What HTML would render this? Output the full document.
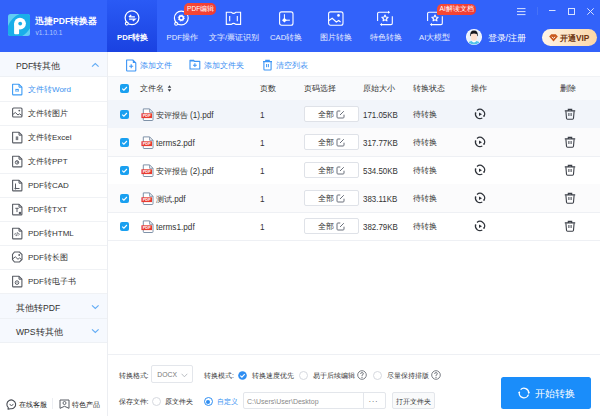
<!DOCTYPE html>
<html><head><meta charset="utf-8">
<style>
*{margin:0;padding:0;box-sizing:border-box}
html,body{width:600px;height:416px;overflow:hidden;background:#fff;font-family:"Liberation Sans",sans-serif;color:#333}
.abs{position:absolute}
svg{position:absolute;overflow:visible}
#hdr{position:absolute;left:0;top:0;width:600px;height:52px;background:#3262fa}
.t{position:absolute;white-space:nowrap;line-height:1}
.l{font-size:8.8px;display:inline-block;transform:scaleX(.93);transform-origin:0 0}
.l2{transform:scaleX(.9)}
.nav{font-size:7.7px;color:#e8eeff;top:34px}
.si{position:absolute;left:0;width:107px;height:25px;border-bottom:1px solid #f0f2f5}
.si .t{left:28px;top:9px;font-size:8px;color:#333}
.sec{position:absolute;left:0;width:107px;height:24px;background:#f6f9fe;border-bottom:1px solid #eef1f5}
.sec .t{left:16px;top:10px;font-size:8.6px;color:#333}
.row{position:absolute;left:108px;width:492px;height:28px;border-bottom:1px solid #eef0f4}
.row .t{font-size:8px;color:#333;top:10px}
.cb{position:absolute;width:9px;height:9px;border-radius:2px;background:#1aa0f0}
.btn{position:absolute;left:304px;width:55px;height:16px;border:1px solid #dfe2e8;border-radius:2px;background:#fff}
</style></head><body>
<div id="hdr">
  <div class="abs" style="left:107px;top:0;width:50px;height:52px;background:linear-gradient(#2a5af5,#1a42e1)"></div>
  <!-- logo -->
  <svg style="left:8px;top:14px" width="22" height="22" viewBox="0 0 22 22"><defs><clipPath id="lg"><rect width="22" height="22" rx="2.5"/></clipPath></defs><rect width="22" height="22" rx="2.5" fill="#62cdf3"/><g clip-path="url(#lg)"><ellipse cx="11.8" cy="11.5" rx="15" ry="9.8" transform="rotate(-45 11.8 11.5)" fill="#1aaee9"/></g><circle cx="12" cy="9.6" r="5.9" fill="#fff"/><path d="M6.1 9.6h5v9.6q0 1-1 1h-3q-1 0-1-1z" fill="#fff"/><circle cx="12.2" cy="9.6" r="1.9" fill="#1aaee9"/></svg>
  <div class="t" style="left:35px;top:17px;font-size:8.6px;font-weight:bold;color:#fff">迅捷PDF转换器</div>
  <div class="t" style="left:35.5px;top:29.5px;font-size:6.5px;color:#b4c9fb">v1.1.10.1</div>
  <!-- nav icons -->
  <svg style="left:124px;top:10px" width="16" height="17" viewBox="0 0 16 17"><circle cx="8" cy="7.8" r="6.9" fill="none" stroke="#fff" stroke-width="1.2"/><circle cx="2.8" cy="13.6" r="1.45" fill="#2150ea" stroke="#fff" stroke-width="1.1"/><path d="M4.9 6.9H10.9M4.9 6.9L7.2 5M5.1 9.1H11.1L8.8 11" fill="none" stroke="#fff" stroke-width="1.25"/></svg>
  <svg style="left:173px;top:10px" width="16" height="17" viewBox="0 0 16 17"><circle cx="8.3" cy="8" r="6.9" fill="none" stroke="#fff" stroke-width="1.2"/><circle cx="3.1" cy="13.8" r="1.45" fill="#3262fa" stroke="#fff" stroke-width="1.1"/><circle cx="8.3" cy="8" r="2.1" fill="none" stroke="#fff" stroke-width="1.6"/><circle cx="8.3" cy="8" r="3.1" fill="none" stroke="#fff" stroke-width=".9" stroke-dasharray="1 1.44"/></svg>
  <svg style="left:225px;top:11px" width="17" height="15" viewBox="0 0 17 15"><path d="M1.3 1.3H6.4Q8.6 3.3 10.8 1.3H15.6V13.4H10.8Q8.6 11.4 6.4 13.4H1.3Z" fill="none" stroke="#fff" stroke-width="1.1"/><path d="M4.7 4.9v5.3M12.3 4.9v5.3" stroke="#fff" stroke-width="1.1"/></svg>
  <svg style="left:278px;top:11px" width="16" height="15" viewBox="0 0 16 15"><rect x="1.6" y="0.9" width="13.4" height="13.4" rx="2" fill="none" stroke="#fff" stroke-width="1.1"/><path d="M6.4 3.2v6h5.5" fill="none" stroke="#fff" stroke-width="1"/><path d="M6.4 6.8l2.4 2.4-2.4 2.4-2.4-2.4z" fill="#fff"/></svg>
  <svg style="left:327px;top:11px" width="17" height="15" viewBox="0 0 17 15"><rect x="1.6" y="0.9" width="14.4" height="13.4" rx="2" fill="none" stroke="#fff" stroke-width="1.1"/><path d="M1.6 9.7L5.2 7.3 9.3 11 11.7 9.5 13.6 11" fill="none" stroke="#fff" stroke-width="1.1"/><circle cx="11.5" cy="4.4" r="1.3" fill="#fff"/></svg>
  <svg style="left:375px;top:9px" width="19" height="19" viewBox="0 0 19 19"><path d="M2.6 12V4.6Q2.6 3.3 3.9 3.3H13.2M17.3 7.2V14.3Q17.3 15.6 16 15.6H6.8" fill="none" stroke="#fff" stroke-width="1.1"/><path d="M13 1.8L15.2 3.3 13 4.8zM7 14.1L4.8 15.6 7 17.1z" fill="#fff"/><path d="M10 6l.95 1.95 2.15.3-1.55 1.5.37 2.1L10 10.85l-1.92 1 .37-2.1-1.55-1.5 2.15-.3z" fill="none" stroke="#fff" stroke-width="1.1" stroke-linejoin="round"/></svg>
  <svg style="left:424.5px;top:9px" width="19" height="19" viewBox="0 0 19 19"><path d="M2.6 12V4.6Q2.6 3.3 3.9 3.3H13.2M17.3 7.2V14.3Q17.3 15.6 16 15.6H6.8" fill="none" stroke="#fff" stroke-width="1.1"/><path d="M13 1.8L15.2 3.3 13 4.8zM7 14.1L4.8 15.6 7 17.1z" fill="#fff"/><path d="M10 6l.95 1.95 2.15.3-1.55 1.5.37 2.1L10 10.85l-1.92 1 .37-2.1-1.55-1.5 2.15-.3z" fill="none" stroke="#fff" stroke-width="1.1" stroke-linejoin="round"/></svg>
  <div class="t nav" style="left:117px;font-weight:bold;color:#fff">PDF转换</div>
  <div class="t nav" style="left:166.5px">PDF操作</div>
  <div class="t nav" style="left:209px">文字/票证识别</div>
  <div class="t nav" style="left:270px">CAD转换</div>
  <div class="t nav" style="left:320px">图片转换</div>
  <div class="t nav" style="left:369.5px">特色转换</div>
  <div class="t nav" style="left:419px">AI大模型</div>
  <!-- badges -->
  <div class="abs" style="left:184.2px;top:3.2px;width:31.6px;height:11.8px;border-radius:5px 5px 5px 1px;background:linear-gradient(90deg,#f84a33,#ef3b34)"></div>
  <div class="t" style="left:187px;top:5.5px;font-size:6.6px;color:#fff">PDF编辑</div>
  <div class="abs" style="left:437px;top:3.5px;width:39px;height:11.5px;border-radius:5px 5px 5px 1px;background:linear-gradient(90deg,#f84a33,#ef3b34)"></div>
  <div class="t" style="left:439.5px;top:5.5px;font-size:6.8px;color:#fff">AI解读文档</div>
  <!-- window controls -->
  <svg style="left:517px;top:8px" width="9" height="8" viewBox="0 0 9 8"><path d="M0 0.6h8.5M0 3.6h8.5M0 6.6h8.5" stroke="#d8e2ff" stroke-width="1"/></svg>
  <div class="abs" style="left:537px;top:7px;width:1px;height:8px;background:#4672f8"></div>
  <svg style="left:549px;top:7px" width="8" height="8" viewBox="0 0 8 8"><path d="M0 3.5h6.5" stroke="#d8e2ff" stroke-width="1"/></svg>
  <svg style="left:568px;top:7.5px" width="8" height="8" viewBox="0 0 8 8"><rect x="0.5" y="0.5" width="6" height="6" fill="none" stroke="#d8e2ff" stroke-width="1"/></svg>
  <svg style="left:586.5px;top:7.5px" width="8" height="8" viewBox="0 0 8 8"><path d="M0.3 0.3l6.4 6.4M6.7 0.3l-6.4 6.4" stroke="#d8e2ff" stroke-width="1"/></svg>
  <!-- avatar -->
  <svg style="left:466px;top:29px" width="16" height="16" viewBox="0 0 16 16"><defs><clipPath id="av"><circle cx="8" cy="8" r="7.6"/></clipPath></defs><circle cx="8" cy="8" r="8" fill="#fff"/><circle cx="8" cy="8" r="7.3" fill="#e9f1fb"/><g clip-path="url(#av)"><path d="M1 16.5Q1.5 12.6 5.6 12L8 13.6 10.4 12Q14.5 12.6 15 16.5z" fill="#52c2ea"/><path d="M5.6 12L8 13.6 10.4 12 9.6 11.2H6.4z" fill="#fff"/><rect x="5.1" y="4.2" width="5.8" height="7.6" rx="2.4" fill="#fde0cf"/><path d="M4.3 7.2Q3.6 1.6 8 1.6Q12.4 1.6 11.7 7.2L11.1 7.1 10.8 4.9Q8 4 5.2 4.9L4.9 7.1z" fill="#14161c"/></g></svg>
  <div class="t" style="left:487.5px;top:33.7px;font-size:9px;color:#fff">登录/注册</div>
  <div class="abs" style="left:541.5px;top:28.5px;width:55.5px;height:17px;border-radius:8.5px;background:linear-gradient(90deg,#fff5e8,#fbd6a5)"></div>
  <svg style="left:549px;top:33.5px" width="9" height="8" viewBox="0 0 9 8"><path d="M0.2 2.4L2.2 0.3h4.6l2 2.1L4.5 7.6z" fill="#c9581c"/><path d="M2.8 2.8L4.5 4.3 6.2 2.8" fill="none" stroke="#fff" stroke-width="0.9"/></svg>
  <div class="t" style="left:560px;top:33.5px;font-size:8.3px;font-weight:bold;color:#6e3410">开通VIP</div>
</div>

<!-- sidebar -->
<div class="abs" style="left:0;top:52px;width:107px;height:364px;background:#fff"></div>
<div class="abs" style="left:107px;top:52px;width:1px;height:364px;background:#eceef2"></div>
<div class="sec" style="top:52px;height:25px"><div class="t">PDF转其他</div></div>
<svg width="9" height="6" viewBox="0 0 9 6" style="left:91px;top:62px"><path d="M1 4.6L4.3 1.5 7.6 4.6" fill="none" stroke="#62acf5" stroke-width="1.15"/></svg>
<div class="si" style="top:77px"><div class="t" style="color:#3b93f0">文件转Word</div></div>
<svg width="12" height="13" viewBox="0 0 12 13" style="left:11px;top:83px"><path d="M1.6 1.3H8L10.9 4.2V11.2Q10.9 11.9 10.2 11.9H2.3Q1.6 11.9 1.6 11.2Z" fill="none" stroke="#3c9bf5" stroke-width="1.1" stroke-linejoin="round"/><path d="M8 1.3V4.2H10.9" fill="none" stroke="#3c9bf5" stroke-width="1"/><rect x="4.2" y="5.9" width="3.8" height="2.6" fill="#3c9bf5"/><path d="M4.5 6.5l.7 1.6.8-1.2.8 1.2.7-1.6" stroke="#fff" stroke-width=".5" fill="none"/></svg>
<div class="si" style="top:101px"><div class="t" style="">文件转图片</div></div>
<svg width="12" height="12" viewBox="0 0 12 12" style="left:11px;top:107px"><rect x="1.6" y="1" width="9.4" height="9" rx="1" fill="none" stroke="#585c64" stroke-width="1.1"/><path d="M1.8 7.5L4.3 5.5 7 8 8.5 6.8 10.8 8.5" fill="none" stroke="#585c64" stroke-width="1"/><circle cx="8.3" cy="3.6" r=".9" fill="#585c64"/></svg>
<div class="si" style="top:125px"><div class="t" style="">文件转Excel</div></div>
<svg width="12" height="13" viewBox="0 0 12 13" style="left:11px;top:131px"><path d="M1.6 1.3H8L10.9 4.2V11.2Q10.9 11.9 10.2 11.9H2.3Q1.6 11.9 1.6 11.2Z" fill="none" stroke="#585c64" stroke-width="1.1" stroke-linejoin="round"/><path d="M8 1.3V4.2H10.9" fill="none" stroke="#585c64" stroke-width="1"/><rect x="4.8" y="5.5" width="2.4" height="3.6" fill="#585c64"/><path d="M5.4 6.2h1.2M5.4 7.3h1.2M5.4 8.4h1.2" stroke="#fff" stroke-width=".4"/></svg>
<div class="si" style="top:149px"><div class="t" style="">文件转PPT</div></div>
<svg width="12" height="13" viewBox="0 0 12 13" style="left:11px;top:155px"><path d="M1.6 1.3H8L10.9 4.2V11.2Q10.9 11.9 10.2 11.9H2.3Q1.6 11.9 1.6 11.2Z" fill="none" stroke="#585c64" stroke-width="1.1" stroke-linejoin="round"/><path d="M8 1.3V4.2H10.9" fill="none" stroke="#585c64" stroke-width="1"/><circle cx="6" cy="7.4" r="1.7" fill="none" stroke="#585c64" stroke-width="1"/><path d="M6 5.7v1.7h1.7" fill="none" stroke="#585c64" stroke-width=".8"/></svg>
<div class="si" style="top:173px"><div class="t" style="">PDF转CAD</div></div>
<svg width="12" height="13" viewBox="0 0 12 13" style="left:11px;top:179px"><path d="M1.6 1.3H8L10.9 4.2V11.2Q10.9 11.9 10.2 11.9H2.3Q1.6 11.9 1.6 11.2Z" fill="none" stroke="#585c64" stroke-width="1.1" stroke-linejoin="round"/><path d="M8 1.3V4.2H10.9" fill="none" stroke="#585c64" stroke-width="1"/><path d="M4.5 4.5v5h4" fill="none" stroke="#585c64" stroke-width="1"/><path d="M4.5 8l1.2 1.5-1.2 1.2-1.2-1.2z" fill="#585c64"/></svg>
<div class="si" style="top:197px"><div class="t" style="">PDF转TXT</div></div>
<svg width="12" height="13" viewBox="0 0 12 13" style="left:11px;top:203px"><path d="M1.6 1.3H8L10.9 4.2V11.2Q10.9 11.9 10.2 11.9H2.3Q1.6 11.9 1.6 11.2Z" fill="none" stroke="#585c64" stroke-width="1.1" stroke-linejoin="round"/><path d="M8 1.3V4.2H10.9" fill="none" stroke="#585c64" stroke-width="1"/><path d="M4.3 5.3h3.4M6 5.3v3.8" stroke="#585c64" stroke-width="1"/><circle cx="9" cy="10" r="1.3" fill="#585c64"/></svg>
<div class="si" style="top:221px"><div class="t" style="">PDF转HTML</div></div>
<svg width="12" height="13" viewBox="0 0 12 13" style="left:11px;top:227px"><path d="M1.6 1.3H8L10.9 4.2V11.2Q10.9 11.9 10.2 11.9H2.3Q1.6 11.9 1.6 11.2Z" fill="none" stroke="#585c64" stroke-width="1.1" stroke-linejoin="round"/><path d="M8 1.3V4.2H10.9" fill="none" stroke="#585c64" stroke-width="1"/><path d="M4.9 5.8L3.6 7.2l1.3 1.4M7.1 5.8l1.3 1.4-1.3 1.4M6.5 5.3l-1 3.8" fill="none" stroke="#585c64" stroke-width=".8"/></svg>
<div class="si" style="top:245px"><div class="t" style="">PDF转长图</div></div>
<svg width="12" height="12" viewBox="0 0 12 12" style="left:11px;top:251px"><path d="M3.5 1h5L11 3.5v5L8.5 11h-5L1.5 8.5v-5z" fill="none" stroke="#585c64" stroke-width="1.1"/><path d="M1.8 7.8L4.3 5.8 7 8.3 8.5 7 10.8 8.6" fill="none" stroke="#585c64" stroke-width="1"/><circle cx="8.2" cy="4" r=".9" fill="#585c64"/></svg>
<div class="si" style="top:269px"><div class="t" style="">PDF转电子书</div></div>
<svg width="12" height="13" viewBox="0 0 12 13" style="left:11px;top:275px"><path d="M1.6 1.3H8L10.9 4.2V11.2Q10.9 11.9 10.2 11.9H2.3Q1.6 11.9 1.6 11.2Z" fill="none" stroke="#585c64" stroke-width="1.1" stroke-linejoin="round"/><path d="M8 1.3V4.2H10.9" fill="none" stroke="#585c64" stroke-width="1"/><circle cx="6" cy="7.6" r="1.8" fill="none" stroke="#585c64" stroke-width="1"/><circle cx="6" cy="7.6" r=".5" fill="#585c64"/></svg>
<div class="sec" style="top:294px;height:25px"><div class="t" style="top:9.5px">其他转PDF</div></div>
<svg width="9" height="6" viewBox="0 0 9 6" style="left:91px;top:303.5px"><path d="M1 1.4L4.3 4.5 7.6 1.4" fill="none" stroke="#62acf5" stroke-width="1.15"/></svg>
<div class="sec" style="top:319px;height:24px"><div class="t" style="top:9px">WPS转其他</div></div>
<svg width="9" height="6" viewBox="0 0 9 6" style="left:91px;top:328px"><path d="M1 1.4L4.3 4.5 7.6 1.4" fill="none" stroke="#62acf5" stroke-width="1.15"/></svg>
<svg width="11" height="11" viewBox="0 0 11 11" style="left:6px;top:399px"><path d="M2.3 8.6A4.4 4.4 0 1 1 4.6 9.7L2 10.1z" fill="none" stroke="#4a4e56" stroke-width="1.1" stroke-linejoin="round"/><path d="M3.6 5.4Q5.5 7.6 7.4 5.4" fill="none" stroke="#4a4e56" stroke-width="1"/></svg>
<div class="t" style="left:19px;top:401.7px;font-size:6.5px;color:#222">在线客服</div>
<div class="abs" style="left:52px;top:398px;width:1px;height:11px;background:#eceef2"></div>
<svg width="11" height="10" viewBox="0 0 11 10" style="left:58.5px;top:398.5px"><path d="M1 1h9v8.3L5.5 7.3 1 9.3z" fill="none" stroke="#585c64" stroke-width="1" stroke-linejoin="round"/><circle cx="5.5" cy="4" r="1.5" fill="none" stroke="#585c64" stroke-width=".9"/></svg>
<div class="t" style="left:71.5px;top:401.7px;font-size:6.5px;color:#222">特色产品</div>

<!-- main -->
<div class="abs" style="left:108px;top:76px;width:492px;height:24px;background:#f9fafc;border-top:1px solid #f0f2f5"></div>
<svg width="12" height="13" viewBox="0 0 12 13" style="left:125px;top:58.5px"><path d="M1.6 1H7.8L10.8 4V11.3Q10.8 12 10.1 12H2.3Q1.6 12 1.6 11.3Z" fill="none" stroke="#3d95f5" stroke-width="1.1" stroke-linejoin="round"/><path d="M7.8 1V4H10.8z" fill="#3d95f5"/><path d="M4.2 7.3h4M6.2 5.3v4" stroke="#3d95f5" stroke-width="1.1"/></svg>
<div class="t" style="left:140px;top:62px;font-size:7.8px;color:#3b8ff3">添加文件</div>
<svg width="12" height="11" viewBox="0 0 12 11" style="left:189px;top:59px"><path d="M1 1.2H4.5L5.5 2.4H10.8V10H1Z" fill="none" stroke="#3d95f5" stroke-width="1.1" stroke-linejoin="round"/><path d="M1 1h3.5l1 1.4H1z" fill="#3d95f5"/><path d="M4 6.2h3.8M5.9 4.3v3.8" stroke="#3d95f5" stroke-width="1.1"/></svg>
<div class="t" style="left:204px;top:62px;font-size:7.8px;color:#3b8ff3">添加文件夹</div>
<svg width="11" height="12" viewBox="0 0 11 12" style="left:261.5px;top:58.5px"><path d="M1 2.6H10M3.8 2.3V1.2H7.2V2.3" fill="none" stroke="#3d95f5" stroke-width="1.1"/><path d="M3.8 1h3.4v1.3H3.8z" fill="#3d95f5"/><path d="M1.9 2.8V10.3Q1.9 11 2.6 11H8.4Q9.1 11 9.1 10.3V2.8" fill="none" stroke="#3d95f5" stroke-width="1.1"/><path d="M4.6 5v3.2M6.4 5v3.2" stroke="#3d95f5" stroke-width="1"/></svg>
<div class="t" style="left:276px;top:62px;font-size:7.8px;color:#3b8ff3">清空列表</div>

<div class="cb" style="left:120px;top:84px"></div><svg width="9" height="9" viewBox="0 0 9 9" style="left:120px;top:84px"><path d="M2.2 4.6L3.9 6.2 6.9 3" fill="none" stroke="#fff" stroke-width="1.1"/></svg>
<div class="t" style="left:140px;top:84.5px;font-size:8px;color:#333">文件名</div>
<svg width="5" height="7" viewBox="0 0 5 7" style="left:167px;top:85px"><path d="M2.5 0.3L4.3 2.8H0.7zM2.5 6.7L4.3 4.2H0.7z" fill="#3b3f47"/></svg>
<div class="t" style="left:260px;top:84.5px;font-size:8px;color:#333">页数</div>
<div class="t" style="left:304px;top:84.5px;font-size:8px;color:#333">页码选择</div>
<div class="t" style="left:362.5px;top:84.5px;font-size:8px;color:#333">原始大小</div>
<div class="t" style="left:412.5px;top:84.5px;font-size:8px;color:#333">转换状态</div>
<div class="t" style="left:471px;top:84.5px;font-size:8px;color:#333">操作</div>
<div class="t" style="left:560px;top:84.5px;font-size:8px;color:#333">删除</div>

<div id="rows">
<div class="row" style="top:100px;height:29px;background:#f2f5fa;"></div>
<div class="cb" style="left:120px;top:110px"></div><svg width="9" height="9" viewBox="0 0 9 9" style="left:120px;top:110px"><path d="M2.2 4.6L3.9 6.2 6.9 3" fill="none" stroke="#fff" stroke-width="1.1"/></svg>
<svg width="14" height="14" viewBox="0 0 14 14" style="left:140px;top:107px"><path d="M3.3 1.9H9.6L13 5.3V12.8Q13 13.5 12.3 13.5H4Q3.3 13.5 3.3 12.8Z" fill="#fff" stroke="#7f92a8" stroke-width="1" stroke-linejoin="round"/><path d="M9.6 1.9V5.3H13" fill="none" stroke="#7f92a8" stroke-width=".9"/><rect x="1.4" y="6.3" width="10.6" height="4.8" fill="#e83a30"/><text x="6.7" y="10.2" font-size="4" font-family="Liberation Sans" font-weight="bold" fill="#fff" text-anchor="middle">PDF</text></svg>
<div class="t" style="left:156px;top:111px;font-size:8px">安评报告 <span class="l">(1).pdf</span></div>
<div class="t" style="left:260px;top:111px;font-size:8px"><span class="l">1</span></div>
<div class="btn" style="top:106px"></div>
<div class="t" style="left:317.5px;top:111px;font-size:8px">全部</div>
<svg width="9" height="9" viewBox="0 0 9 9" style="left:335.5px;top:110px"><path d="M4.3 1H1.9Q1 1 1 1.9V7.1Q1 8 1.9 8H7.1Q8 8 8 7.1V4.7" fill="none" stroke="#6b717c" stroke-width="1"/><path d="M4 5L7.8 1.2" stroke="#6b717c" stroke-width="1"/></svg>
<div class="t" style="left:363px;top:111px;font-size:8px"><span class="l l2">171.05KB</span></div>
<div class="t" style="left:412.5px;top:111px;font-size:8px">待转换</div>
<svg width="12" height="12" viewBox="0 0 12 12" style="left:474.4px;top:108.4px"><path d="M2.98 2.53A4.6 4.6 0 0 1 10.02 8.23M8.3 9.98A4.6 4.6 0 0 1 1.54 4.89" fill="none" stroke="#2e3239" stroke-width="1.2"/><circle cx="1.6" cy="5" r=".8" fill="#2e3239"/><circle cx="9.95" cy="8.1" r=".8" fill="#2e3239"/><path d="M5 4.5L8 6.2 5 7.9z" fill="#2e3239"/></svg>
<svg width="12" height="12" viewBox="0 0 12 12" style="left:563.5px;top:108px"><path d="M0.8 2.9H11.2M4.3 2.6V1.4H7.7V2.6" fill="none" stroke="#3b3f47" stroke-width="1.1"/><path d="M1.9 3.2L2.5 10.3Q2.6 11.2 3.5 11.2H8.5Q9.4 11.2 9.5 10.3L10.1 3.2" fill="none" stroke="#3b3f47" stroke-width="1.1"/><path d="M4.9 5v3M7.1 5v3" stroke="#3b3f47" stroke-width="1"/></svg>

<div class="row" style="top:128px;height:29px;background:#fbfbfc;"></div>
<div class="cb" style="left:120px;top:138px"></div><svg width="9" height="9" viewBox="0 0 9 9" style="left:120px;top:138px"><path d="M2.2 4.6L3.9 6.2 6.9 3" fill="none" stroke="#fff" stroke-width="1.1"/></svg>
<svg width="14" height="14" viewBox="0 0 14 14" style="left:140px;top:135px"><path d="M3.3 1.9H9.6L13 5.3V12.8Q13 13.5 12.3 13.5H4Q3.3 13.5 3.3 12.8Z" fill="#fff" stroke="#7f92a8" stroke-width="1" stroke-linejoin="round"/><path d="M9.6 1.9V5.3H13" fill="none" stroke="#7f92a8" stroke-width=".9"/><rect x="1.4" y="6.3" width="10.6" height="4.8" fill="#e83a30"/><text x="6.7" y="10.2" font-size="4" font-family="Liberation Sans" font-weight="bold" fill="#fff" text-anchor="middle">PDF</text></svg>
<div class="t" style="left:156px;top:139px;font-size:8px"><span class="l">terms2.pdf</span></div>
<div class="t" style="left:260px;top:139px;font-size:8px"><span class="l">1</span></div>
<div class="btn" style="top:134px"></div>
<div class="t" style="left:317.5px;top:139px;font-size:8px">全部</div>
<svg width="9" height="9" viewBox="0 0 9 9" style="left:335.5px;top:138px"><path d="M4.3 1H1.9Q1 1 1 1.9V7.1Q1 8 1.9 8H7.1Q8 8 8 7.1V4.7" fill="none" stroke="#6b717c" stroke-width="1"/><path d="M4 5L7.8 1.2" stroke="#6b717c" stroke-width="1"/></svg>
<div class="t" style="left:363px;top:139px;font-size:8px"><span class="l l2">317.77KB</span></div>
<div class="t" style="left:412.5px;top:139px;font-size:8px">待转换</div>
<svg width="12" height="12" viewBox="0 0 12 12" style="left:474.4px;top:136.4px"><path d="M2.98 2.53A4.6 4.6 0 0 1 10.02 8.23M8.3 9.98A4.6 4.6 0 0 1 1.54 4.89" fill="none" stroke="#2e3239" stroke-width="1.2"/><circle cx="1.6" cy="5" r=".8" fill="#2e3239"/><circle cx="9.95" cy="8.1" r=".8" fill="#2e3239"/><path d="M5 4.5L8 6.2 5 7.9z" fill="#2e3239"/></svg>
<svg width="12" height="12" viewBox="0 0 12 12" style="left:563.5px;top:136px"><path d="M0.8 2.9H11.2M4.3 2.6V1.4H7.7V2.6" fill="none" stroke="#3b3f47" stroke-width="1.1"/><path d="M1.9 3.2L2.5 10.3Q2.6 11.2 3.5 11.2H8.5Q9.4 11.2 9.5 10.3L10.1 3.2" fill="none" stroke="#3b3f47" stroke-width="1.1"/><path d="M4.9 5v3M7.1 5v3" stroke="#3b3f47" stroke-width="1"/></svg>

<div class="row" style="top:156px;height:29px;"></div>
<div class="cb" style="left:120px;top:166px"></div><svg width="9" height="9" viewBox="0 0 9 9" style="left:120px;top:166px"><path d="M2.2 4.6L3.9 6.2 6.9 3" fill="none" stroke="#fff" stroke-width="1.1"/></svg>
<svg width="14" height="14" viewBox="0 0 14 14" style="left:140px;top:163px"><path d="M3.3 1.9H9.6L13 5.3V12.8Q13 13.5 12.3 13.5H4Q3.3 13.5 3.3 12.8Z" fill="#fff" stroke="#7f92a8" stroke-width="1" stroke-linejoin="round"/><path d="M9.6 1.9V5.3H13" fill="none" stroke="#7f92a8" stroke-width=".9"/><rect x="1.4" y="6.3" width="10.6" height="4.8" fill="#e83a30"/><text x="6.7" y="10.2" font-size="4" font-family="Liberation Sans" font-weight="bold" fill="#fff" text-anchor="middle">PDF</text></svg>
<div class="t" style="left:156px;top:167px;font-size:8px">安评报告 <span class="l">(2).pdf</span></div>
<div class="t" style="left:260px;top:167px;font-size:8px"><span class="l">1</span></div>
<div class="btn" style="top:162px"></div>
<div class="t" style="left:317.5px;top:167px;font-size:8px">全部</div>
<svg width="9" height="9" viewBox="0 0 9 9" style="left:335.5px;top:166px"><path d="M4.3 1H1.9Q1 1 1 1.9V7.1Q1 8 1.9 8H7.1Q8 8 8 7.1V4.7" fill="none" stroke="#6b717c" stroke-width="1"/><path d="M4 5L7.8 1.2" stroke="#6b717c" stroke-width="1"/></svg>
<div class="t" style="left:363px;top:167px;font-size:8px"><span class="l l2">534.50KB</span></div>
<div class="t" style="left:412.5px;top:167px;font-size:8px">待转换</div>
<svg width="12" height="12" viewBox="0 0 12 12" style="left:474.4px;top:164.4px"><path d="M2.98 2.53A4.6 4.6 0 0 1 10.02 8.23M8.3 9.98A4.6 4.6 0 0 1 1.54 4.89" fill="none" stroke="#2e3239" stroke-width="1.2"/><circle cx="1.6" cy="5" r=".8" fill="#2e3239"/><circle cx="9.95" cy="8.1" r=".8" fill="#2e3239"/><path d="M5 4.5L8 6.2 5 7.9z" fill="#2e3239"/></svg>
<svg width="12" height="12" viewBox="0 0 12 12" style="left:563.5px;top:164px"><path d="M0.8 2.9H11.2M4.3 2.6V1.4H7.7V2.6" fill="none" stroke="#3b3f47" stroke-width="1.1"/><path d="M1.9 3.2L2.5 10.3Q2.6 11.2 3.5 11.2H8.5Q9.4 11.2 9.5 10.3L10.1 3.2" fill="none" stroke="#3b3f47" stroke-width="1.1"/><path d="M4.9 5v3M7.1 5v3" stroke="#3b3f47" stroke-width="1"/></svg>

<div class="row" style="top:184px;height:29px;background:#fbfbfc;"></div>
<div class="cb" style="left:120px;top:194px"></div><svg width="9" height="9" viewBox="0 0 9 9" style="left:120px;top:194px"><path d="M2.2 4.6L3.9 6.2 6.9 3" fill="none" stroke="#fff" stroke-width="1.1"/></svg>
<svg width="14" height="14" viewBox="0 0 14 14" style="left:140px;top:191px"><path d="M3.3 1.9H9.6L13 5.3V12.8Q13 13.5 12.3 13.5H4Q3.3 13.5 3.3 12.8Z" fill="#fff" stroke="#7f92a8" stroke-width="1" stroke-linejoin="round"/><path d="M9.6 1.9V5.3H13" fill="none" stroke="#7f92a8" stroke-width=".9"/><rect x="1.4" y="6.3" width="10.6" height="4.8" fill="#e83a30"/><text x="6.7" y="10.2" font-size="4" font-family="Liberation Sans" font-weight="bold" fill="#fff" text-anchor="middle">PDF</text></svg>
<div class="t" style="left:156px;top:195px;font-size:8px">测试<span class="l">.pdf</span></div>
<div class="t" style="left:260px;top:195px;font-size:8px"><span class="l">1</span></div>
<div class="btn" style="top:190px"></div>
<div class="t" style="left:317.5px;top:195px;font-size:8px">全部</div>
<svg width="9" height="9" viewBox="0 0 9 9" style="left:335.5px;top:194px"><path d="M4.3 1H1.9Q1 1 1 1.9V7.1Q1 8 1.9 8H7.1Q8 8 8 7.1V4.7" fill="none" stroke="#6b717c" stroke-width="1"/><path d="M4 5L7.8 1.2" stroke="#6b717c" stroke-width="1"/></svg>
<div class="t" style="left:363px;top:195px;font-size:8px"><span class="l l2">383.11KB</span></div>
<div class="t" style="left:412.5px;top:195px;font-size:8px">待转换</div>
<svg width="12" height="12" viewBox="0 0 12 12" style="left:474.4px;top:192.4px"><path d="M2.98 2.53A4.6 4.6 0 0 1 10.02 8.23M8.3 9.98A4.6 4.6 0 0 1 1.54 4.89" fill="none" stroke="#2e3239" stroke-width="1.2"/><circle cx="1.6" cy="5" r=".8" fill="#2e3239"/><circle cx="9.95" cy="8.1" r=".8" fill="#2e3239"/><path d="M5 4.5L8 6.2 5 7.9z" fill="#2e3239"/></svg>
<svg width="12" height="12" viewBox="0 0 12 12" style="left:563.5px;top:192px"><path d="M0.8 2.9H11.2M4.3 2.6V1.4H7.7V2.6" fill="none" stroke="#3b3f47" stroke-width="1.1"/><path d="M1.9 3.2L2.5 10.3Q2.6 11.2 3.5 11.2H8.5Q9.4 11.2 9.5 10.3L10.1 3.2" fill="none" stroke="#3b3f47" stroke-width="1.1"/><path d="M4.9 5v3M7.1 5v3" stroke="#3b3f47" stroke-width="1"/></svg>

<div class="row" style="top:212px;height:29px;"></div>
<div class="cb" style="left:120px;top:222px"></div><svg width="9" height="9" viewBox="0 0 9 9" style="left:120px;top:222px"><path d="M2.2 4.6L3.9 6.2 6.9 3" fill="none" stroke="#fff" stroke-width="1.1"/></svg>
<svg width="14" height="14" viewBox="0 0 14 14" style="left:140px;top:219px"><path d="M3.3 1.9H9.6L13 5.3V12.8Q13 13.5 12.3 13.5H4Q3.3 13.5 3.3 12.8Z" fill="#fff" stroke="#7f92a8" stroke-width="1" stroke-linejoin="round"/><path d="M9.6 1.9V5.3H13" fill="none" stroke="#7f92a8" stroke-width=".9"/><rect x="1.4" y="6.3" width="10.6" height="4.8" fill="#e83a30"/><text x="6.7" y="10.2" font-size="4" font-family="Liberation Sans" font-weight="bold" fill="#fff" text-anchor="middle">PDF</text></svg>
<div class="t" style="left:156px;top:223px;font-size:8px"><span class="l">terms1.pdf</span></div>
<div class="t" style="left:260px;top:223px;font-size:8px"><span class="l">1</span></div>
<div class="btn" style="top:218px"></div>
<div class="t" style="left:317.5px;top:223px;font-size:8px">全部</div>
<svg width="9" height="9" viewBox="0 0 9 9" style="left:335.5px;top:222px"><path d="M4.3 1H1.9Q1 1 1 1.9V7.1Q1 8 1.9 8H7.1Q8 8 8 7.1V4.7" fill="none" stroke="#6b717c" stroke-width="1"/><path d="M4 5L7.8 1.2" stroke="#6b717c" stroke-width="1"/></svg>
<div class="t" style="left:363px;top:223px;font-size:8px"><span class="l l2">382.79KB</span></div>
<div class="t" style="left:412.5px;top:223px;font-size:8px">待转换</div>
<svg width="12" height="12" viewBox="0 0 12 12" style="left:474.4px;top:220.4px"><path d="M2.98 2.53A4.6 4.6 0 0 1 10.02 8.23M8.3 9.98A4.6 4.6 0 0 1 1.54 4.89" fill="none" stroke="#2e3239" stroke-width="1.2"/><circle cx="1.6" cy="5" r=".8" fill="#2e3239"/><circle cx="9.95" cy="8.1" r=".8" fill="#2e3239"/><path d="M5 4.5L8 6.2 5 7.9z" fill="#2e3239"/></svg>
<svg width="12" height="12" viewBox="0 0 12 12" style="left:563.5px;top:220px"><path d="M0.8 2.9H11.2M4.3 2.6V1.4H7.7V2.6" fill="none" stroke="#3b3f47" stroke-width="1.1"/><path d="M1.9 3.2L2.5 10.3Q2.6 11.2 3.5 11.2H8.5Q9.4 11.2 9.5 10.3L10.1 3.2" fill="none" stroke="#3b3f47" stroke-width="1.1"/><path d="M4.9 5v3M7.1 5v3" stroke="#3b3f47" stroke-width="1"/></svg>

</div>
<!-- bottom panel -->
<div class="abs" style="left:108px;top:354px;width:492px;height:1px;background:#eef0f4"></div>
<div class="t" style="left:118.5px;top:372px;font-size:7px;color:#333">转换格式:</div>
<div class="abs" style="left:151px;top:365px;width:42px;height:18px;border:1px solid #e3e6eb;border-radius:2px"></div>
<div class="t" style="left:157.3px;top:371.5px;font-size:6.8px;color:#777">DOCX</div>
<svg width="7" height="5" viewBox="0 0 7 5" style="left:180.5px;top:372.5px"><path d="M.6 .8L3.4 3.8 6.3 .8" fill="none" stroke="#aaaeb5" stroke-width=".8"/></svg>
<div class="t" style="left:204px;top:372px;font-size:7px;color:#333">转换模式:</div>
<svg width="9" height="9" viewBox="0 0 9 9" style="left:237.8px;top:370.8px"><circle cx="4.5" cy="4.5" r="4.3" fill="#2f8ef2"/><path d="M2.3 4.6L3.9 6.1 6.7 3.1" fill="none" stroke="#fff" stroke-width="1.1"/></svg>
<div class="t" style="left:251.7px;top:372px;font-size:7px;color:#333">转换速度优先</div>
<div class="abs" style="left:299px;top:370.5px;width:9px;height:9px;border-radius:50%;border:1px solid #d6d9df;background:#fff"></div>
<div class="t" style="left:313px;top:372px;font-size:7px;color:#333">易于后续编辑</div>
<svg width="10" height="10" viewBox="0 0 10 10" style="left:356.7px;top:370px"><circle cx="5" cy="5" r="4.3" fill="none" stroke="#6b6f77" stroke-width=".9"/><path d="M3.6 3.9Q3.6 2.6 5 2.6Q6.4 2.6 6.4 3.8Q6.4 4.6 5 5.2V6.1" fill="none" stroke="#6b6f77" stroke-width=".9"/><circle cx="5" cy="7.4" r=".55" fill="#6b6f77"/></svg>
<div class="abs" style="left:372.7px;top:370.5px;width:9px;height:9px;border-radius:50%;border:1px solid #d6d9df;background:#fff"></div>
<div class="t" style="left:386.7px;top:372px;font-size:7px;color:#333">尽量保持排版</div>
<svg width="10" height="10" viewBox="0 0 10 10" style="left:430.5px;top:370px"><circle cx="5" cy="5" r="4.3" fill="none" stroke="#6b6f77" stroke-width=".9"/><path d="M3.6 3.9Q3.6 2.6 5 2.6Q6.4 2.6 6.4 3.8Q6.4 4.6 5 5.2V6.1" fill="none" stroke="#6b6f77" stroke-width=".9"/><circle cx="5" cy="7.4" r=".55" fill="#6b6f77"/></svg>
<div class="t" style="left:118.5px;top:398px;font-size:7px;color:#333">保存文件:</div>
<div class="abs" style="left:152px;top:397px;width:9px;height:9px;border-radius:50%;border:1px solid #d6d9df;background:#fff"></div>
<div class="t" style="left:165px;top:398px;font-size:7px;color:#333">原文件夹</div>
<div class="abs" style="left:203.5px;top:397px;width:9px;height:9px;border-radius:50%;border:1px solid #2f8ef2;background:#fff"></div>
<div class="abs" style="left:206px;top:399.5px;width:4px;height:4px;border-radius:50%;background:#2f8ef2"></div>
<div class="t" style="left:217px;top:398px;font-size:7px;color:#2f8ef2">自定义</div>
<div class="abs" style="left:242.7px;top:392px;width:143px;height:17px;border:1px solid #e3e6eb;border-radius:2px"></div>
<div class="abs" style="left:363px;top:392px;width:1px;height:17px;background:#e3e6eb"></div>
<div class="t" style="left:247px;top:398px;font-size:7px;color:#888">C:\Users\User\Desktop</div>
<div class="t" style="left:368.5px;top:397.5px;font-size:8px;color:#555;letter-spacing:.6px">···</div>
<div class="abs" style="left:391.7px;top:392px;width:43.5px;height:17px;border:1px solid #e3e6eb;border-radius:2px;background:#f9fafb"></div>
<div class="t" style="left:396px;top:398px;font-size:7px;color:#333">打开文件夹</div>
<div class="abs" style="left:501px;top:376.5px;width:90px;height:32.5px;border-radius:2.5px;background:#1a8dfa"></div>
<svg width="12" height="12" viewBox="0 0 12 12" style="left:518px;top:386.8px"><path d="M2.61 2.61A4.8 4.8 0 0 1 10.8 6M10.51 7.64A4.8 4.8 0 0 1 1.27 5.17" fill="none" stroke="#fff" stroke-width="1.3"/><path d="M9.7 5.3L11.9 5.3 10.8 7.2zM0.2 5.9L2.3 6 1.2 4.1z" fill="#fff"/></svg>
<div class="t" style="left:535px;top:388.5px;font-size:10px;color:#fff">开始转换</div>
</body></html>
